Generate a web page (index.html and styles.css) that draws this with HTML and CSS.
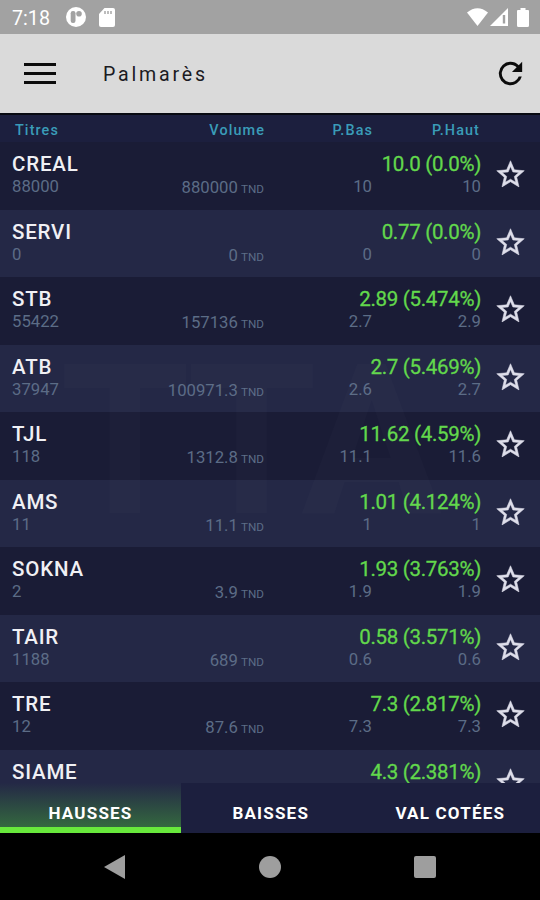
FILE: index.html
```html
<!DOCTYPE html>
<html lang="fr">
<head>
    <meta charset="UTF-8" />
    <meta name="viewport" content="width=device-width, initial-scale=1.0" />
    <title>Palmarès</title>
    <link rel="stylesheet" href="styles.css">
</head>
<body>
    <!-- Shared star icon -->
    <svg class="defs" width="0" height="0">
        <symbol id="star" viewBox="0 0 24 24">
            <path d="M22 9.24l-7.19-.62L12 2 9.19 8.63 2 9.24l5.46 4.73L5.82 21 12 17.27 18.18 21l-1.63-7.03L22 9.24zM12 15.4l-3.76 2.27 1-4.28-3.32-2.88 4.38-.38L12 6.1l1.71 4.04 4.38.38-3.32 2.88 1 4.28L12 15.4z" />
        </symbol>
    </svg>

    <div class="phone">
        <div class="status-bar">
            <span class="clock">7:18</span>
            <svg class="status-app" width="20" height="20" viewBox="0 0 20 20">
                <circle cx="10" cy="10" r="10" fill="#fff" />
                <rect x="4.7" y="4" width="4.8" height="12" rx="2.2" fill="#a2a2a2" />
                <circle cx="13" cy="6.8" r="2.8" fill="#a2a2a2" />
            </svg>
            <svg class="status-sd" width="16" height="19" viewBox="0 0 16 19">
                <path d="M5.5 0H14a2 2 0 0 1 2 2v15a2 2 0 0 1-2 2H2a2 2 0 0 1-2-2V6z" fill="#fff" />
                <path d="M6 3v3M9 3v3M12 3v3" stroke="#a2a2a2" stroke-width="1.4" />
            </svg>
            <div class="status-right">
                <svg width="21" height="18" viewBox="0 0 21 18">
                    <path d="M0 4.5Q10.5-4 21 4.5L10.5 18z" fill="#fff" />
                </svg>
                <svg width="18" height="18" viewBox="0 0 18 18">
                    <path d="M18 0v18H0z" fill="#fff" />
                    <path d="M14 7v8.500" stroke="#a2a2a2" stroke-width="2.400" />
                </svg>
                <svg class="battery" width="12" height="19" viewBox="0 0 12 19">
                    <path d="M3.5 0h5v2H11a1 1 0 0 1 1 1v14.5a1.5 1.5 0 0 1-1.5 1.5h-9A1.5 1.5 0 0 1 0 17.5V3a1 1 0 0 1 1-1h2.5z" fill="#fff" />
                </svg>
            </div>
        </div>

        <header class="app-bar">
            <div class="menu"><i></i><i></i><i></i></div>
            <h1>Palmarès</h1>
            <svg class="refresh" width="35" height="35" viewBox="0 0 24 24">
                <path d="M17.65 6.35A7.96 7.96 0 0 0 12 4a8 8 0 1 0 7.73 10h-2.08A6 6 0 1 1 12 6c1.66 0 3.14.69 4.22 1.78L13 11h7V4z" />
            </svg>
        </header>

        <div class="columns">
            <span>Titres</span>
            <span class="right">Volume</span>
            <span class="right">P.Bas</span>
            <span class="right">P.Haut</span>
        </div>

        <main class="list">
            <div class="watermark" aria-hidden="true">TTA</div>
            <div id="rows"></div>
        </main>

        <nav class="tabs">
            <a class="tab active">HAUSSES</a>
            <a class="tab">BAISSES</a>
            <a class="tab">VAL COTÉES</a>
        </nav>

        <div class="nav-bar">
            <svg width="21" height="24" viewBox="0 0 21 24"><path d="M21 0v24L0 12z" /></svg>
            <svg width="22" height="22" viewBox="0 0 22 22"><circle cx="11" cy="11" r="11" /></svg>
            <svg width="22" height="22" viewBox="0 0 22 22"><rect width="22" height="22" rx="2" /></svg>
        </div>
    </div>

    <script>
        // name, quantity, volume, price, variation, low, high
        const stocks = [
            ["CREAL", "88000", "880000", "10.0", "0.0", "10", "10"],
            ["SERVI", "0", "0", "0.77", "0.0", "0", "0"],
            ["STB", "55422", "157136", "2.89", "5.474", "2.7", "2.9"],
            ["ATB", "37947", "100971.3", "2.7", "5.469", "2.6", "2.7"],
            ["TJL", "118", "1312.8", "11.62", "4.59", "11.1", "11.6"],
            ["AMS", "11", "11.1", "1.01", "4.124", "1", "1"],
            ["SOKNA", "2", "3.9", "1.93", "3.763", "1.9", "1.9"],
            ["TAIR", "1188", "689", "0.58", "3.571", "0.6", "0.6"],
            ["TRE", "12", "87.6", "7.3", "2.817", "7.3", "7.3"],
            ["SIAME", "", "", "4.3", "2.381", "", ""]
        ];

        document.getElementById('rows').innerHTML = stocks.map(([name, qty, volume, price, change, low, high]) => `
            <div class="row">
                <span class="name">${name}</span>
                <span class="price">${price} (${change}%)</span>
                <span class="qty">${qty}</span>
                <span class="volume">${volume}${volume ? ' <small>TND</small>' : ''}</span>
                <span class="low">${low}</span>
                <span class="high">${high}</span>
                <svg class="star"><use href="#star" /></svg>
            </div>
        `).join('');
    </script>
</body>
</html>
```
FILE: styles.css
```css
body {
    margin: 0;
    background: #000;
    font-family: Roboto, "Liberation Sans", sans-serif;
}

.defs {
    position: absolute;
}

.phone {
    display: flex;
    flex-direction: column;
    width: 540px;
    height: 900px;
    overflow: hidden;
    background: #1c1f3e;
}

/* Android status bar */
.status-bar {
    display: flex;
    align-items: center;
    flex: none;
    height: 34px;
    padding: 0 11px 0 12px;
    box-sizing: border-box;
    background: #a2a2a2;
    color: #fff;
}

.clock {
    width: 54px;
    font-size: 19.7px;
    padding-top: 2px;
}

.status-sd {
    margin-left: 13px;
}

.status-right {
    display: flex;
    align-items: center;
    gap: 2px;
    margin-left: auto;
}

.battery {
    margin-left: 7px;
}

/* Title bar */
.app-bar {
    display: flex;
    align-items: center;
    flex: none;
    height: 81px;
    padding: 0 12px 1px 24px;
    box-sizing: border-box;
    background: #dadada;
    border-bottom: 2px solid #080a12;
}

.menu {
    display: flex;
    flex-direction: column;
    gap: 6px;
    width: 32px;
}

.menu i {
    height: 3px;
    background: #0c0c0c;
}

.app-bar h1 {
    margin: 2px 0 0 47px;
    font-size: 19.6px;
    font-weight: 400;
    letter-spacing: 2.8px;
    color: #1b1b22;
}

.refresh {
    margin-left: auto;
    fill: #0c0c0c;
}

/* Column titles */
.columns {
    display: grid;
    grid-template-columns: 130px 120px 108px 107px;
    align-items: center;
    flex: none;
    height: 27px;
    padding: 4px 0 0 15px;
    box-sizing: border-box;
    background: #1c1f3e;
    color: #3a9cb8;
    font-size: 14.4px;
    font-weight: 500;
    letter-spacing: 1.1px;
}

.right {
    text-align: right;
}

/* Stock list */
.list {
    position: relative;
    flex: none;
    height: 641px;
    overflow: hidden;
}

.watermark {
    position: absolute;
    left: 60px;
    top: 179px;
    font-size: 210px;
    font-weight: 700;
    line-height: 1.15;
    letter-spacing: -5px;
    color: rgba(255, 255, 255, 0.016);
    pointer-events: none;
}

.row {
    display: grid;
    grid-template-columns: 110px 142px 108px 109px 59px;
    grid-template-rows: 22px 22px;
    height: 67.5px;
    padding: 11px 0 0 12px;
    box-sizing: border-box;
    background: #1a1c36;
    color: #5c6c86;
    font-size: 16.7px;
    line-height: 23px;
}

.row:nth-child(even) {
    background: #242846;
}

.name {
    grid-column: 1 / 3;
    color: #f0f0f4;
    font-size: 20.5px;
    font-weight: 500;
    letter-spacing: 0.8px;
}

.price {
    grid-column: 3 / 5;
    text-align: right;
    color: #62d84c;
    font-size: 20.5px;
    letter-spacing: -0.3px;
    -webkit-text-stroke: 0.3px #62d84c;
}

.qty {
    grid-area: 2 / 1;
}

.volume {
    grid-area: 2 / 2;
    padding-top: 1px;
    text-align: right;
    word-spacing: -1px;
}

.volume small {
    font-size: 11.7px;
}

.low {
    grid-area: 2 / 3;
    text-align: right;
}

.high {
    grid-area: 2 / 4;
    text-align: right;
}

.star {
    grid-area: 1 / 5 / 3 / 6;
    width: 33px;
    height: 33px;
    margin: 5px 0 0 13px;
    fill: #dedeea;
    stroke: #dedeea;
    stroke-width: 0.4px;
}

/* Bottom tabs */
.tabs {
    display: flex;
    flex: none;
    height: 50px;
}

.tab {
    flex: 1;
    padding-top: 11px;
    box-sizing: border-box;
    border-bottom: 6px solid transparent;
    text-align: center;
    color: #fff;
    font-size: 17px;
    font-weight: 700;
    line-height: 39px;
    letter-spacing: 1.2px;
}

.tab.active {
    flex: 0 0 181px;
    border-bottom-color: #68e83c;
    background: linear-gradient(#242846, #34683f);
}

/* Android navigation bar */
.nav-bar {
    display: flex;
    justify-content: space-between;
    align-items: center;
    flex: 1;
    padding: 0 104px 0 104px;
    background: #000;
    fill: #9e9e9e;
}
```
